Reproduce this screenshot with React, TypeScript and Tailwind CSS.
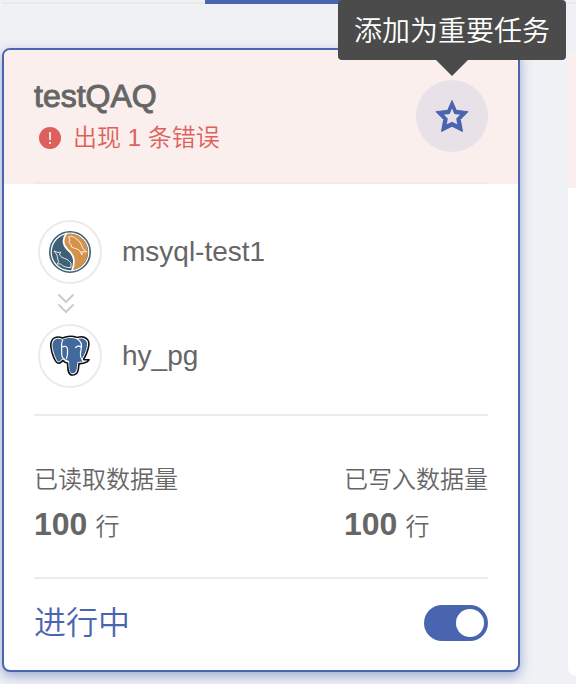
import React, { useState } from "react";

const MysqlIcon: React.FC = () => (
  <svg width="42" height="42" viewBox="0 0 42 42" fill="none" aria-hidden="true">
    <circle cx="21" cy="21" r="20.2" fill="#fff" stroke="#3f6075" strokeWidth="1.6" />
    <circle cx="21" cy="21" r="18.2" fill="#3f6075" />
    <path
      d="M18 3 C13.500 8 14.500 14 18.500 18 C24 22.500 28 28 23.500 39 A18.200 18.200 0 0 0 18 3Z"
      fill="#d4924b"
    />
    <path d="M17.500 2.500 C13 8 14 14 18 18 C23.500 22.500 27.500 28 23 39.500" stroke="#fff" strokeWidth="1.8" />
    {/* Dolphins */}
    <path
      d="M19.500 6 C22 4.500 25 6 27.500 8 C31 10.500 32.500 13 33.500 17 L37.500 21 L33 20.500 L33 24 L31 20 C28 17 26 18 22.500 16 L22 13.500 L20 11.500 L21 9Z"
      stroke="#fff"
      strokeOpacity=".85"
      strokeWidth="1"
      strokeLinejoin="round"
    />
    <path
      d="M22 36.500 C18 37 14 35.500 11.500 33 L8.500 33 L9.500 30.500 C8.500 28 8.500 26 8 24 L5 20 L9 21.500 L11.500 21 L10.500 24 C13 28 18 27 20.500 30.500 L22 32Z"
      stroke="#fff"
      strokeOpacity=".85"
      strokeWidth="1"
      strokeLinejoin="round"
    />
  </svg>
);

const PostgresIcon: React.FC = () => (
  <svg width="42" height="42" viewBox="0 0 42 42" fill="none" aria-hidden="true">
    <path
      d="M13.500 3 C8 .5 1.500 2.500 1.800 11 C2.500 18 6 28 9.500 28.300 C11.500 28.300 12.500 26.500 14 25.500 C15.500 27.500 17.500 28 18.500 28 C19 32 18 40 23.500 40 C29 40 29.500 35 30 28.500 C34 29 38.500 27.500 40 24.800 C38.500 24.500 36 25 34.500 24.500 C38 19 42 8 38.500 4.500 C35.500 1 31 1.500 28 2.500 C23 .5 18 1 13.500 3Z"
      fill="#fff"
      stroke="#111"
      strokeWidth="1.600"
      strokeLinejoin="round"
    />
    <path
      d="M13 4.700 C8.500 2.500 3.300 4 3.500 11 C4.300 17.500 7.500 26 9.500 26.500 C11 26.500 12 24.500 13.500 23.500 L15.500 25.500 L20 26 C20.500 31 19.500 38.300 23.500 38.300 C28 38.300 27.700 33 28.500 27 L33.500 26.500 L32.500 24.500 C36 19.500 40 9 37 5.800 C34.500 3 31 3.300 28 4.200 C23 2.300 17.500 3 13 4.700Z"
      fill="#41699c"
    />
    <path
      d="M13.800 5 C11.500 9 13 14 12.700 19 C12.500 23 14.500 24.500 18.500 26 M13 12 C16 10.500 18.500 11.500 18.500 14.500 C18.500 18 19 20 17.500 23.500 M27.500 3.500 C32.500 6 33.500 10 32 15 C31 19 30.500 22 33.500 25 M26.500 12.500 C28.500 11 31 11 32.500 12.500"
      stroke="#fff"
      strokeWidth="1.200"
      strokeLinecap="round"
    />
  </svg>
);

const Stat: React.FC<{ label: string; value: number }> = ({ label, value }) => (
  <div>
    <dt className="text-2xl leading-8">{label}</dt>
    <dd className="mt-2 flex items-baseline gap-2">
      <span className="text-[32px] leading-10 font-bold">{value}</span>
      <span className="text-2xl leading-8">行</span>
    </dd>
  </div>
);

const App: React.FC = () => {
  const [running, setRunning] = useState(true);
  const [starred, setStarred] = useState(false);

  return (
    <div className="min-h-screen overflow-hidden bg-[#f0f1f5] pl-0.5 font-['Liberation_Sans','Noto_Sans_CJK_SC',sans-serif] font-[350] text-[#666]">
      {/* Tab underline */}
      <div className="flex h-1 items-end">
        <div className="h-0.5 w-[203px] bg-[#e8e9e9]" />
        <div className="h-1 w-60 bg-[#4a65b0]" />
        <div className="h-0.5 flex-1 bg-[#e8e9e9]" />
      </div>

      <main className="flex items-start gap-12 pt-11">
        <article className="min-w-0 flex-1 rounded-lg border-2 border-[#4a65b0] bg-white shadow-[0_4px_12px_#4a65b080]">
          <header className="rounded-t-md bg-[#fbefed] px-[30px]">
            <div className="flex justify-between border-b-2 border-[#ebebe8] pt-[26px] pb-6">
              <div>
                <h2 className="text-[32px] leading-10 font-normal [-webkit-text-stroke:1px]">testQAQ</h2>
                <p className="flex items-center gap-3 pt-0.5 pl-[5px] text-2xl leading-10 text-[#de5f5c]">
                  <svg width="22" height="22" viewBox="0 0 22 22" aria-hidden="true">
                    <circle cx="11" cy="11" r="11" fill="#de5f5c" />
                    <path d="M11 5v8M11 15v2" stroke="#fff" strokeWidth="1.6" />
                  </svg>
                  出现 1 条错误
                </p>
              </div>
              <div className="relative mt-1 size-[72px]">
                <button
                  type="button"
                  aria-label="添加为重要任务"
                  aria-pressed={starred}
                  onClick={() => setStarred(!starred)}
                  className="flex size-[72px] items-center justify-center rounded-full bg-[#e8e1e8]"
                >
                  <svg width="36" height="36" viewBox="0 0 36 36" aria-hidden="true">
                    <path
                      d="M18 2.500 L22.300 12.300 L34 13.700 L26.300 21.500 L28.500 33.500 L18 28.300 L7.500 33.500 L9.700 21.500 L2 13.700 L13.700 12.300Z"
                      fill="#4a65b0"
                      stroke="#4a65b0"
                      strokeWidth="1"
                      strokeLinejoin="round"
                    />
                    {!starred && (
                      <path
                        d="M18 10.500 L20.300 16 L26 16.800 L22.200 20.500 L23.200 26.200 L18 23.700 L12.800 26.200 L13.800 20.500 L10 16.800 L15.700 16Z"
                        fill="#e8e1e8"
                      />
                    )}
                  </svg>
                </button>
                <div
                  role="tooltip"
                  className="absolute bottom-full left-1/2 mb-5 -translate-x-1/2 rounded bg-[#4b4b4b] px-4 pt-3 pb-2 text-[28px] leading-10 whitespace-nowrap text-white"
                >
                  添加为重要任务
                  <span className="absolute top-full left-1/2 -translate-x-1/2 border-x-16 border-t-16 border-x-transparent border-t-[#4b4b4b]" />
                </div>
              </div>
            </div>
          </header>

          <div className="px-[30px]">
            <section className="border-b-2 border-[#ebebeb] pt-9 pb-[26px] pl-1 text-[28px]">
              <div className="flex items-center gap-5">
                <span className="flex size-16 items-center justify-center rounded-full border-2 border-[#ebebeb]">
                  <MysqlIcon />
                </span>
                msyql-test1
              </div>
              <svg className="my-2 ml-4" width="24" height="24" viewBox="0 0 24 24" fill="none" aria-hidden="true">
                <path
                  d="M5 3l7 7 7-7M5 13l7 7 7-7"
                  stroke="#ccc"
                  strokeWidth="2"
                  strokeLinecap="round"
                />
              </svg>
              <div className="flex items-center gap-5">
                <span className="flex size-16 items-center justify-center rounded-full border-2 border-[#ebebeb]">
                  <PostgresIcon />
                </span>
                hy_pg
              </div>
            </section>

            <dl className="flex justify-between border-b-2 border-[#ebebeb] pt-12 pb-[33px]">
              <Stat label="已读取数据量" value={100} />
              <Stat label="已写入数据量" value={100} />
            </dl>

            <label className="flex items-center justify-between pt-5 pb-[23px] text-[32px] leading-12 text-[#4a65b0]">
              进行中
              <input
                type="checkbox"
                role="switch"
                checked={running}
                onChange={(e) => setRunning(e.target.checked)}
                className="flex h-9 w-16 appearance-none items-center rounded-full bg-[#b8bcc8] px-1 before:size-7 before:rounded-full before:bg-white checked:justify-end checked:bg-[#4a65b0]"
              />
            </label>
          </div>
        </article>

        {/* Next card in the list */}
        <article className="mt-1 w-2 shrink-0 overflow-hidden rounded-l-lg bg-white pb-[488px]">
          <div className="h-[136px] bg-[#fbefed]" />
        </article>
      </main>
    </div>
  );
};

export default App;
